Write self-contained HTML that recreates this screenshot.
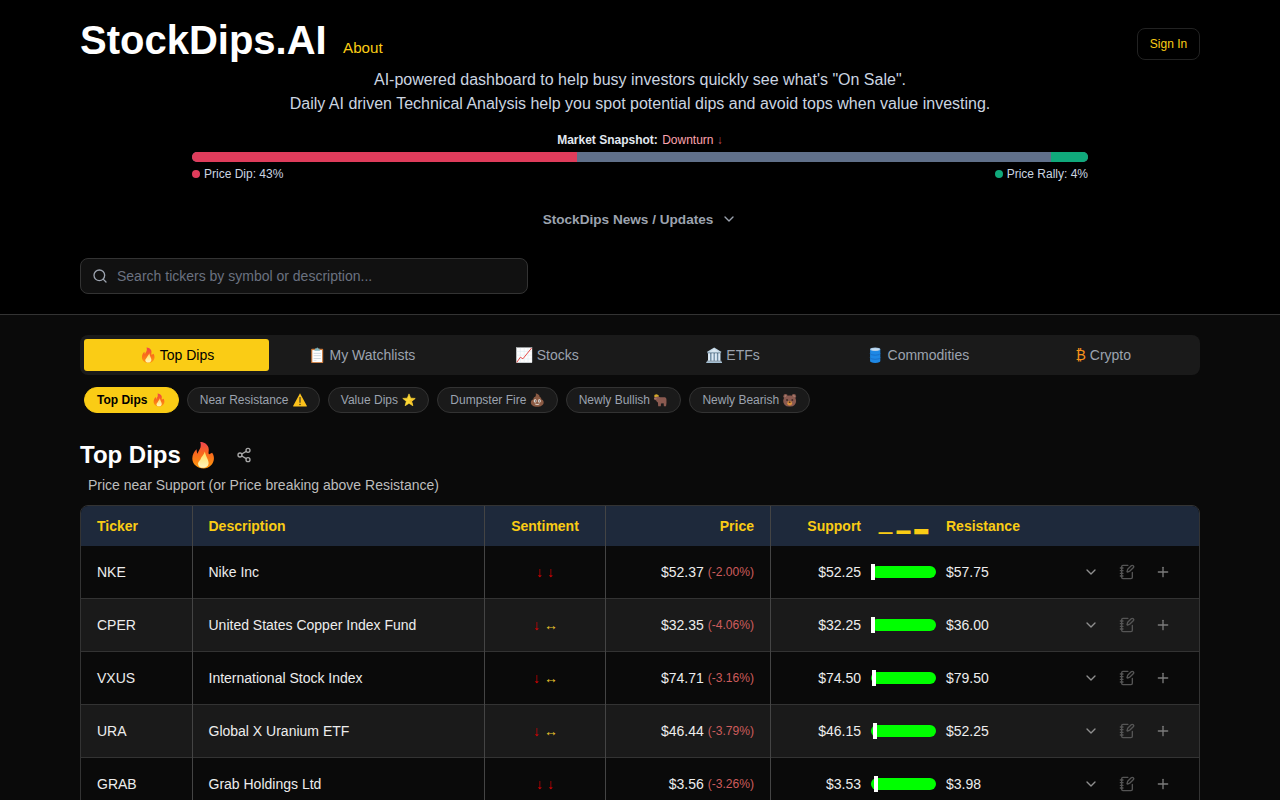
<!DOCTYPE html>
<html lang="en">
<head>
<meta charset="utf-8">
<title>StockDips.AI</title>
<style>
*{box-sizing:border-box;margin:0;padding:0}
html,body{width:1280px;height:800px;overflow:hidden;background:#0a0a0a}
body{font-family:"Liberation Sans",sans-serif;color:#fff;position:relative}
.hdr{position:absolute;left:0;top:0;width:1280px;height:315px;background:#000;border-bottom:1px solid #333}
h1{position:absolute;left:80px;top:16px;font-size:40px;line-height:48px;font-weight:700;color:#fff;letter-spacing:0}
.about{position:absolute;left:343px;top:38px;font-size:15.2px;line-height:20px;color:#facc15}
.signin{position:absolute;left:1137px;top:28px;width:63px;height:32px;border:1px solid #222;border-radius:8px;font-size:12px;line-height:30px;text-align:center;color:#facc15}
.tag{position:absolute;left:0;width:1280px;text-align:center;font-size:16px;line-height:24px;color:#cbd5e1}
.snap{position:absolute;left:0;width:1280px;top:132px;text-align:center;font-size:12px;line-height:16px;font-weight:700;color:#e2e8f0}
.snap span{font-weight:400;color:#fda4af;margin-left:1px}
.snap span i{font-style:normal;color:#b94b5a}
.bar{position:absolute;left:192px;top:152.1px;width:896px;height:9.6px;border-radius:5px;background:#60708a;overflow:hidden}
.bar i{position:absolute;top:0;height:10px}
.bar .r{left:0;width:385px;background:#df3c5b}
.bar .g{right:0;width:37px;background:#10a97b}
.leg{position:absolute;top:166px;font-size:12px;line-height:16px;color:#cbd5e1}
.leg b{display:inline-block;width:8px;height:8px;border-radius:50%;margin-right:4px;vertical-align:0px}
.news{position:absolute;left:0;width:1280px;top:211px;text-align:center;font-size:13.6px;line-height:18px;font-weight:700;color:#9ca3af}
.search{position:absolute;left:80px;top:258px;width:448px;height:36px;border:1px solid #333;border-radius:8px;background:#111;font-size:14px;line-height:34px;color:#6b7280;padding-left:36px}
.search svg{position:absolute;left:11px;top:9px}
.tabs{position:absolute;left:80px;top:335px;width:1120px;height:40px;border-radius:8px;background:#1a1a1a;padding:4px;display:flex}
.tabs div{flex:1 1 0;height:32px;line-height:32px;text-align:center;font-size:14px;color:#9ca3af;border-radius:3px}
.tabs div.on{background:#facc15;color:#000}
.pills{position:absolute;left:84px;top:387px;display:flex;gap:8px}
.pills div{height:26px;line-height:24px;border:1px solid #333;border-radius:13px;background:#1a1a1a;color:#9ca3af;font-size:12px;padding:0 12px;white-space:nowrap}
.pills div.on{background:#facc15;border-color:#facc15;color:#000;font-weight:700}
h2{position:absolute;left:80px;top:439px;font-size:24px;line-height:32px;font-weight:700;color:#fff}
.sub{position:absolute;left:88px;top:475px;font-size:14px;line-height:20px;color:#bdbdbd}
.tbl{position:absolute;left:80px;top:505px;width:1120px;height:320px;border:1px solid #333;border-radius:8px 8px 0 0;overflow:hidden}
.th{position:absolute;left:0;top:0;width:1118px;height:40px;background:#1e293b;color:#facc15;font-weight:700;font-size:14px;line-height:40px}
.tr{position:absolute;left:0;width:1118px;height:53px;border-bottom:1px solid #333;font-size:14px;line-height:52px;color:#ededed}
.tr.alt{background:#1a1a1a}
.c{position:absolute;top:0;white-space:nowrap}
.v{position:absolute;top:0;width:1px;height:320px;background:#444}
.tk{left:16px}
.ds{left:127.5px}
.st{left:404px;width:120px;text-align:center}
.tr .st{font-size:14px}
.pr{right:445px;text-align:right}
.su{right:338px;text-align:right}
.re{left:865px}
.th .c{color:#facc15}
.pc{font-size:12.1px;color:#cd5c5c;position:relative;top:-1px}
.dn{color:#dc0000}
.nt{color:#e8c22c}
.rng{position:absolute;left:790px;top:20px;width:65px;height:12px;border-radius:6px;background:#00ff00}
.rng i{position:absolute;top:-2px;width:4px;height:16px;background:#fff}
.blk{position:absolute;left:797.5px;top:0;font-family:"Liberation Sans","Noto Sans CJK SC","Noto Sans CJK JP",sans-serif;font-size:14px;line-height:40px;white-space:nowrap;font-weight:700;transform:translateY(.6px)}
.ic{position:absolute;top:18px;width:16px;height:16px;fill:none;stroke-width:2;stroke-linecap:round;stroke-linejoin:round}
.i1{left:1002px;stroke:#8f8f8f}
.i2{left:1038px;stroke:#555}
.i3{left:1074px;stroke:#7c7c7c}
.em{display:inline-block;vertical-align:middle;position:relative}
.e14{width:16.4px;height:16.4px;margin:0 .3px;top:-1px;left:.3px}
.e12{width:14px;height:14px;margin:0 .5px;top:-1px;left:.3px}
.e24{width:28.2px;height:28.2px;margin:0 .9px;top:-2px;left:.7px}
.btc{color:#f7931a}
.share{position:absolute;left:236px;top:447px;width:16px;height:16px;fill:none;stroke:#a8a8a8;stroke-width:2;stroke-linecap:round;stroke-linejoin:round}
.nchev{display:inline-block;width:16px;height:16px;margin-left:8px;vertical-align:-3px;fill:none;stroke:#9ca3af;stroke-width:2;stroke-linecap:round;stroke-linejoin:round}
.search svg{fill:none;stroke:#9ca3af;stroke-width:2;stroke-linecap:round;stroke-linejoin:round}
</style>
</head>
<body>
<div class="hdr"></div>
<h1>StockDips.AI</h1>
<div class="about">About</div>
<div class="signin">Sign In</div>
<div class="tag" style="top:68px">AI-powered dashboard to help busy investors quickly see what's "On Sale".</div>
<div class="tag" style="top:92px">Daily AI driven Technical Analysis help you spot potential dips and avoid tops when value investing.</div>
<div class="snap">Market Snapshot: <span>Downturn <i>↓</i></span></div>
<div class="bar"><i class="r"></i><i class="g"></i></div>
<div class="leg" style="left:192px"><b style="background:#df3c5b"></b>Price Dip: 43%</div>
<div class="leg" style="right:192px"><b style="background:#10a97b"></b>Price Rally: 4%</div>
<div class="news">StockDips News / Updates<svg class="nchev" viewBox="0 0 24 24"><path d="m6 9 6 6 6-6"/></svg></div>
<div class="search"><svg viewBox="0 0 24 24" width="16" height="16"><circle cx="11" cy="11" r="8"/><path d="m21 21-4.3-4.3"/></svg>Search tickers by symbol or description...</div>
<div class="tabs"><div class="on"><svg class="em e14" viewBox="0 0 128 128" role="img" aria-label="🔥"><linearGradient id="fg1" x1="0" y1="0" x2="0" y2="1"><stop offset="0" stop-color="#ef4350"/><stop offset="0.4" stop-color="#f8651f"/><stop offset="1" stop-color="#ff9a0c"/></linearGradient><linearGradient id="fy1" x1="0" y1="0" x2="0" y2="1"><stop offset="0" stop-color="#ffdc55"/><stop offset="1" stop-color="#fff6bf"/></linearGradient><path fill="url(#fg1)" d="M50.8 4C66 4 82 12 88 28C92 40 88 50 88.6 56C90 60 94 62 96 58C99 56 102 54 105 53C112 62 114 74 113 82C112 104 92 125 66 125C38 125 15 106 15 80C15 62 24 46 34.4 37C35 46 36 52 38.5 57.5C42 46 50 36 52 29C54 20 54 12 50.8 4Z"/><path fill="url(#fy1)" d="M72 48C70 62 56 70 52 84C46 92 40 98 41 104C42 116 52 122 64 122C78 122 89 114 89 100C89 84 76 72 72 48Z"/></svg> Top Dips</div><div><svg class="em e14" viewBox="0 0 128 128" role="img" aria-label="📋"><rect x="17" y="14" width="94" height="112" rx="7" fill="#c9783a"/><rect x="26" y="24" width="76" height="94" fill="#fdfdfd"/><path d="M42 30 L48 12 L57 12 L64 2 L71 12 L80 12 L86 30Z" fill="#7fb6c2"/><rect x="36" y="46" width="56" height="5" fill="#b4c4cf"/><rect x="36" y="66" width="56" height="5" fill="#b4c4cf"/><rect x="36" y="86" width="56" height="5" fill="#b4c4cf"/><rect x="36" y="104" width="22" height="5" fill="#cfd8de"/></svg> My Watchlists</div><div><svg class="em e14" viewBox="0 0 128 128" role="img" aria-label="📈"><rect x="3" y="5" width="122" height="118" fill="#fdfdfd" stroke="#d9dfe3" stroke-width="3"/><path d="M34 6v116M64 6v116M94 6v116M4 35h120M4 64h120M4 93h120" stroke="#d3e4ee" stroke-width="3" fill="none"/><polyline points="6,120 34,80 54,92 122,8" fill="none" stroke="#e53935" stroke-width="7" stroke-linejoin="round"/></svg> Stocks</div><div><svg class="em e14" viewBox="0 0 128 128" role="img" aria-label="🏛️"><path d="M64 4 L122 40 L6 40Z" fill="#c3d7e6"/><path d="M64 16 L100 38 L28 38Z" fill="#dbe8f2"/><rect x="10" y="40" width="108" height="9" fill="#a4bfd3"/><rect x="16" y="49" width="96" height="58" fill="#6d8ba3"/><rect x="16" y="49" width="16" height="58" fill="#ddeaf5"/><rect x="43" y="49" width="16" height="58" fill="#ddeaf5"/><rect x="69" y="49" width="16" height="58" fill="#ddeaf5"/><rect x="96" y="49" width="16" height="58" fill="#ddeaf5"/><rect x="8" y="107" width="112" height="8" fill="#c3d7e6"/><rect x="2" y="115" width="124" height="10" fill="#a4bfd3"/></svg> ETFs</div><div><svg class="em e14" viewBox="0 0 128 128" role="img" aria-label="🛢️"><path d="M24 18v92a40 14 0 0 0 80 0v-92z" fill="#1e88e5"/><path d="M24 50a40 14 0 0 0 80 0M24 82a40 14 0 0 0 80 0" stroke="#1669c1" stroke-width="6" fill="none"/><ellipse cx="64" cy="18" rx="40" ry="14" fill="#9cc3e6"/><ellipse cx="64" cy="18" rx="31" ry="9" fill="#c4dcf0"/></svg> Commodities</div><div><span class="btc">₿</span> Crypto</div></div>
<div class="pills"><div class="on">Top Dips <svg class="em e12" viewBox="0 0 128 128" role="img" aria-label="🔥"><linearGradient id="fg2" x1="0" y1="0" x2="0" y2="1"><stop offset="0" stop-color="#ef4350"/><stop offset="0.4" stop-color="#f8651f"/><stop offset="1" stop-color="#ff9a0c"/></linearGradient><linearGradient id="fy2" x1="0" y1="0" x2="0" y2="1"><stop offset="0" stop-color="#ffdc55"/><stop offset="1" stop-color="#fff6bf"/></linearGradient><path fill="url(#fg2)" d="M50.8 4C66 4 82 12 88 28C92 40 88 50 88.6 56C90 60 94 62 96 58C99 56 102 54 105 53C112 62 114 74 113 82C112 104 92 125 66 125C38 125 15 106 15 80C15 62 24 46 34.4 37C35 46 36 52 38.5 57.5C42 46 50 36 52 29C54 20 54 12 50.8 4Z"/><path fill="url(#fy2)" d="M72 48C70 62 56 70 52 84C46 92 40 98 41 104C42 116 52 122 64 122C78 122 89 114 89 100C89 84 76 72 72 48Z"/></svg></div><div>Near Resistance <svg class="em e12" viewBox="0 0 128 128" role="img" aria-label="⚠️"><path d="M64 3 L126 116 a5 5 0 0 1 -4 8 H6 a5 5 0 0 1 -4 -8Z" fill="#fcc21b"/><rect x="59" y="36" width="10" height="54" rx="5" fill="#2a2a2a"/><circle cx="64" cy="105" r="6.5" fill="#2a2a2a"/></svg></div><div>Value Dips <svg class="em e12" viewBox="0 0 128 128" role="img" aria-label="⭐"><polygon points="64.0,8.0 79.3,47.0 121.1,49.5 88.7,76.0 99.3,116.5 64.0,94.0 28.7,116.5 39.3,76.0 6.9,49.5 48.7,47.0" fill="#fdd835" stroke="#fdd835" stroke-width="6" stroke-linejoin="round"/><polygon points="64,68 121.1,49.5 88.7,76.0 99.3,116.5" fill="#f6bf26"/></svg></div><div>Dumpster Fire <svg class="em e12" viewBox="0 0 128 128" role="img" aria-label="💩"><path d="M52 2C64 8 92 14 88 36C100 38 106 48 102 58C116 62 125 72 125 86C125 108 98 126 66 126C32 126 8 108 8 86C8 72 18 62 32 58C28 46 36 36 48 34C54 26 56 14 52 2Z" fill="#8b5a43"/><ellipse cx="47" cy="72" rx="13" ry="15" fill="#fbfaf7"/><ellipse cx="85" cy="72" rx="13" ry="15" fill="#fbfaf7"/><circle cx="48" cy="73" r="6" fill="#3b2a20"/><circle cx="84" cy="73" r="6" fill="#3b2a20"/><path d="M42 96q24 8 48 0q-6 14-24 14t-24-14z" fill="#d9cfc4"/></svg></div><div>Newly Bullish <svg class="em e12" viewBox="0 0 128 128" role="img" aria-label="🐂"><g transform="translate(-8,0)"><path d="M10 26q2-12 14-12q4-6 12 0q14 0 18 16l-12 8l-30-2z" fill="#d6a92a"/><path d="M10 40L40 32 66 38 108 38Q122 42 122 60L122 92 118 122 98 122 96 94 72 96 70 122 46 122 44 86Q32 80 28 68L10 60Q4 50 10 40Z" fill="#8a5a50"/><path d="M10 44l18-4 6 14-18 6q-8-8-6-16z" fill="#a5736a"/></g></svg></div><div>Newly Bearish <svg class="em e12" viewBox="0 0 128 128" role="img" aria-label="🐻"><g transform="translate(-3,0)"><circle cx="26" cy="30" r="20" fill="#8a5a50"/><circle cx="102" cy="30" r="20" fill="#8a5a50"/><circle cx="27" cy="31" r="10" fill="#b08878"/><circle cx="101" cy="31" r="10" fill="#b08878"/><rect x="5" y="22" width="118" height="102" rx="50" fill="#8a5a50"/><ellipse cx="64" cy="94" rx="22" ry="20" fill="#d98f3c"/><ellipse cx="40" cy="64" rx="9" ry="6.5" fill="#2b1c16"/><ellipse cx="88" cy="64" rx="9" ry="6.5" fill="#2b1c16"/><ellipse cx="64" cy="84" rx="9" ry="6" fill="#2b1c16"/></g></svg></div></div>
<h2>Top Dips <svg class="em e24" viewBox="0 0 128 128" role="img" aria-label="🔥"><linearGradient id="fg3" x1="0" y1="0" x2="0" y2="1"><stop offset="0" stop-color="#ef4350"/><stop offset="0.4" stop-color="#f8651f"/><stop offset="1" stop-color="#ff9a0c"/></linearGradient><linearGradient id="fy3" x1="0" y1="0" x2="0" y2="1"><stop offset="0" stop-color="#ffdc55"/><stop offset="1" stop-color="#fff6bf"/></linearGradient><path fill="url(#fg3)" d="M50.8 4C66 4 82 12 88 28C92 40 88 50 88.6 56C90 60 94 62 96 58C99 56 102 54 105 53C112 62 114 74 113 82C112 104 92 125 66 125C38 125 15 106 15 80C15 62 24 46 34.4 37C35 46 36 52 38.5 57.5C42 46 50 36 52 29C54 20 54 12 50.8 4Z"/><path fill="url(#fy3)" d="M72 48C70 62 56 70 52 84C46 92 40 98 41 104C42 116 52 122 64 122C78 122 89 114 89 100C89 84 76 72 72 48Z"/></svg></h2>
<svg class="share" viewBox="0 0 24 24"><circle cx="18" cy="5" r="3"/><circle cx="6" cy="12" r="3"/><circle cx="18" cy="19" r="3"/><path d="M8.59 13.51l6.83 3.98"/><path d="M15.41 6.51l-6.82 3.98"/></svg>
<div class="sub">Price near Support (or Price breaking above Resistance)</div>
<div class="tbl">
<div class="th"><div class="c tk">Ticker</div><div class="c ds">Description</div><div class="c st">Sentiment</div><div class="c pr">Price</div><div class="c su">Support</div><div class="blk">▁ ▂ ▃</div><div class="c re">Resistance</div></div>
<div class="tr" style="top:40px">
<div class="c tk">NKE</div><div class="c ds">Nike Inc</div><div class="c st"><span class="dn">↓</span> <span class="dn">↓</span></div>
<div class="c pr">$52.37 <span class="pc">(-2.00%)</span></div><div class="c su">$52.25</div>
<div class="rng"><i style="left:0px"></i></div><div class="c re">$57.75</div>
<svg class="ic i1" viewBox="0 0 24 24"><path d="m6 9 6 6 6-6"/></svg><svg class="ic i2" viewBox="0 0 24 24"><path d="M13.4 2H6a2 2 0 0 0-2 2v16a2 2 0 0 0 2 2h12a2 2 0 0 0 2-2v-7.4"/><path d="M2 6h4"/><path d="M2 10h4"/><path d="M2 14h4"/><path d="M2 18h4"/><path d="M21.378 5.626a1 1 0 1 0-3.004-3.004l-5.01 5.012a2 2 0 0 0-.506.854l-.837 2.87a.5.5 0 0 0 .62.62l2.87-.837a2 2 0 0 0 .854-.506z"/></svg><svg class="ic i3" viewBox="0 0 24 24"><path d="M5 12h14"/><path d="M12 5v14"/></svg>
</div>
<div class="tr alt" style="top:93px">
<div class="c tk">CPER</div><div class="c ds">United States Copper Index Fund</div><div class="c st" style="padding-left:1px"><span class="dn">↓</span> <span class="nt">↔</span></div>
<div class="c pr">$32.35 <span class="pc">(-4.06%)</span></div><div class="c su">$32.25</div>
<div class="rng"><i style="left:0px"></i></div><div class="c re">$36.00</div>
<svg class="ic i1" viewBox="0 0 24 24"><path d="m6 9 6 6 6-6"/></svg><svg class="ic i2" viewBox="0 0 24 24"><path d="M13.4 2H6a2 2 0 0 0-2 2v16a2 2 0 0 0 2 2h12a2 2 0 0 0 2-2v-7.4"/><path d="M2 6h4"/><path d="M2 10h4"/><path d="M2 14h4"/><path d="M2 18h4"/><path d="M21.378 5.626a1 1 0 1 0-3.004-3.004l-5.01 5.012a2 2 0 0 0-.506.854l-.837 2.87a.5.5 0 0 0 .62.62l2.87-.837a2 2 0 0 0 .854-.506z"/></svg><svg class="ic i3" viewBox="0 0 24 24"><path d="M5 12h14"/><path d="M12 5v14"/></svg>
</div>
<div class="tr" style="top:146px">
<div class="c tk">VXUS</div><div class="c ds">International Stock Index</div><div class="c st" style="padding-left:1px"><span class="dn">↓</span> <span class="nt">↔</span></div>
<div class="c pr">$74.71 <span class="pc">(-3.16%)</span></div><div class="c su">$74.50</div>
<div class="rng"><i style="left:1px"></i></div><div class="c re">$79.50</div>
<svg class="ic i1" viewBox="0 0 24 24"><path d="m6 9 6 6 6-6"/></svg><svg class="ic i2" viewBox="0 0 24 24"><path d="M13.4 2H6a2 2 0 0 0-2 2v16a2 2 0 0 0 2 2h12a2 2 0 0 0 2-2v-7.4"/><path d="M2 6h4"/><path d="M2 10h4"/><path d="M2 14h4"/><path d="M2 18h4"/><path d="M21.378 5.626a1 1 0 1 0-3.004-3.004l-5.01 5.012a2 2 0 0 0-.506.854l-.837 2.87a.5.5 0 0 0 .62.62l2.87-.837a2 2 0 0 0 .854-.506z"/></svg><svg class="ic i3" viewBox="0 0 24 24"><path d="M5 12h14"/><path d="M12 5v14"/></svg>
</div>
<div class="tr alt" style="top:199px">
<div class="c tk">URA</div><div class="c ds">Global X Uranium ETF</div><div class="c st" style="padding-left:1px"><span class="dn">↓</span> <span class="nt">↔</span></div>
<div class="c pr">$46.44 <span class="pc">(-3.79%)</span></div><div class="c su">$46.15</div>
<div class="rng"><i style="left:2px"></i></div><div class="c re">$52.25</div>
<svg class="ic i1" viewBox="0 0 24 24"><path d="m6 9 6 6 6-6"/></svg><svg class="ic i2" viewBox="0 0 24 24"><path d="M13.4 2H6a2 2 0 0 0-2 2v16a2 2 0 0 0 2 2h12a2 2 0 0 0 2-2v-7.4"/><path d="M2 6h4"/><path d="M2 10h4"/><path d="M2 14h4"/><path d="M2 18h4"/><path d="M21.378 5.626a1 1 0 1 0-3.004-3.004l-5.01 5.012a2 2 0 0 0-.506.854l-.837 2.87a.5.5 0 0 0 .62.62l2.87-.837a2 2 0 0 0 .854-.506z"/></svg><svg class="ic i3" viewBox="0 0 24 24"><path d="M5 12h14"/><path d="M12 5v14"/></svg>
</div>
<div class="tr" style="top:252px">
<div class="c tk">GRAB</div><div class="c ds">Grab Holdings Ltd</div><div class="c st"><span class="dn">↓</span> <span class="dn">↓</span></div>
<div class="c pr">$3.56 <span class="pc">(-3.26%)</span></div><div class="c su">$3.53</div>
<div class="rng"><i style="left:3px"></i></div><div class="c re">$3.98</div>
<svg class="ic i1" viewBox="0 0 24 24"><path d="m6 9 6 6 6-6"/></svg><svg class="ic i2" viewBox="0 0 24 24"><path d="M13.4 2H6a2 2 0 0 0-2 2v16a2 2 0 0 0 2 2h12a2 2 0 0 0 2-2v-7.4"/><path d="M2 6h4"/><path d="M2 10h4"/><path d="M2 14h4"/><path d="M2 18h4"/><path d="M21.378 5.626a1 1 0 1 0-3.004-3.004l-5.01 5.012a2 2 0 0 0-.506.854l-.837 2.87a.5.5 0 0 0 .62.62l2.87-.837a2 2 0 0 0 .854-.506z"/></svg><svg class="ic i3" viewBox="0 0 24 24"><path d="M5 12h14"/><path d="M12 5v14"/></svg>
</div>
<div class="v" style="left:111px"></div><div class="v" style="left:403px"></div><div class="v" style="left:524px"></div><div class="v" style="left:689px"></div>
</div>
</body>
</html>
